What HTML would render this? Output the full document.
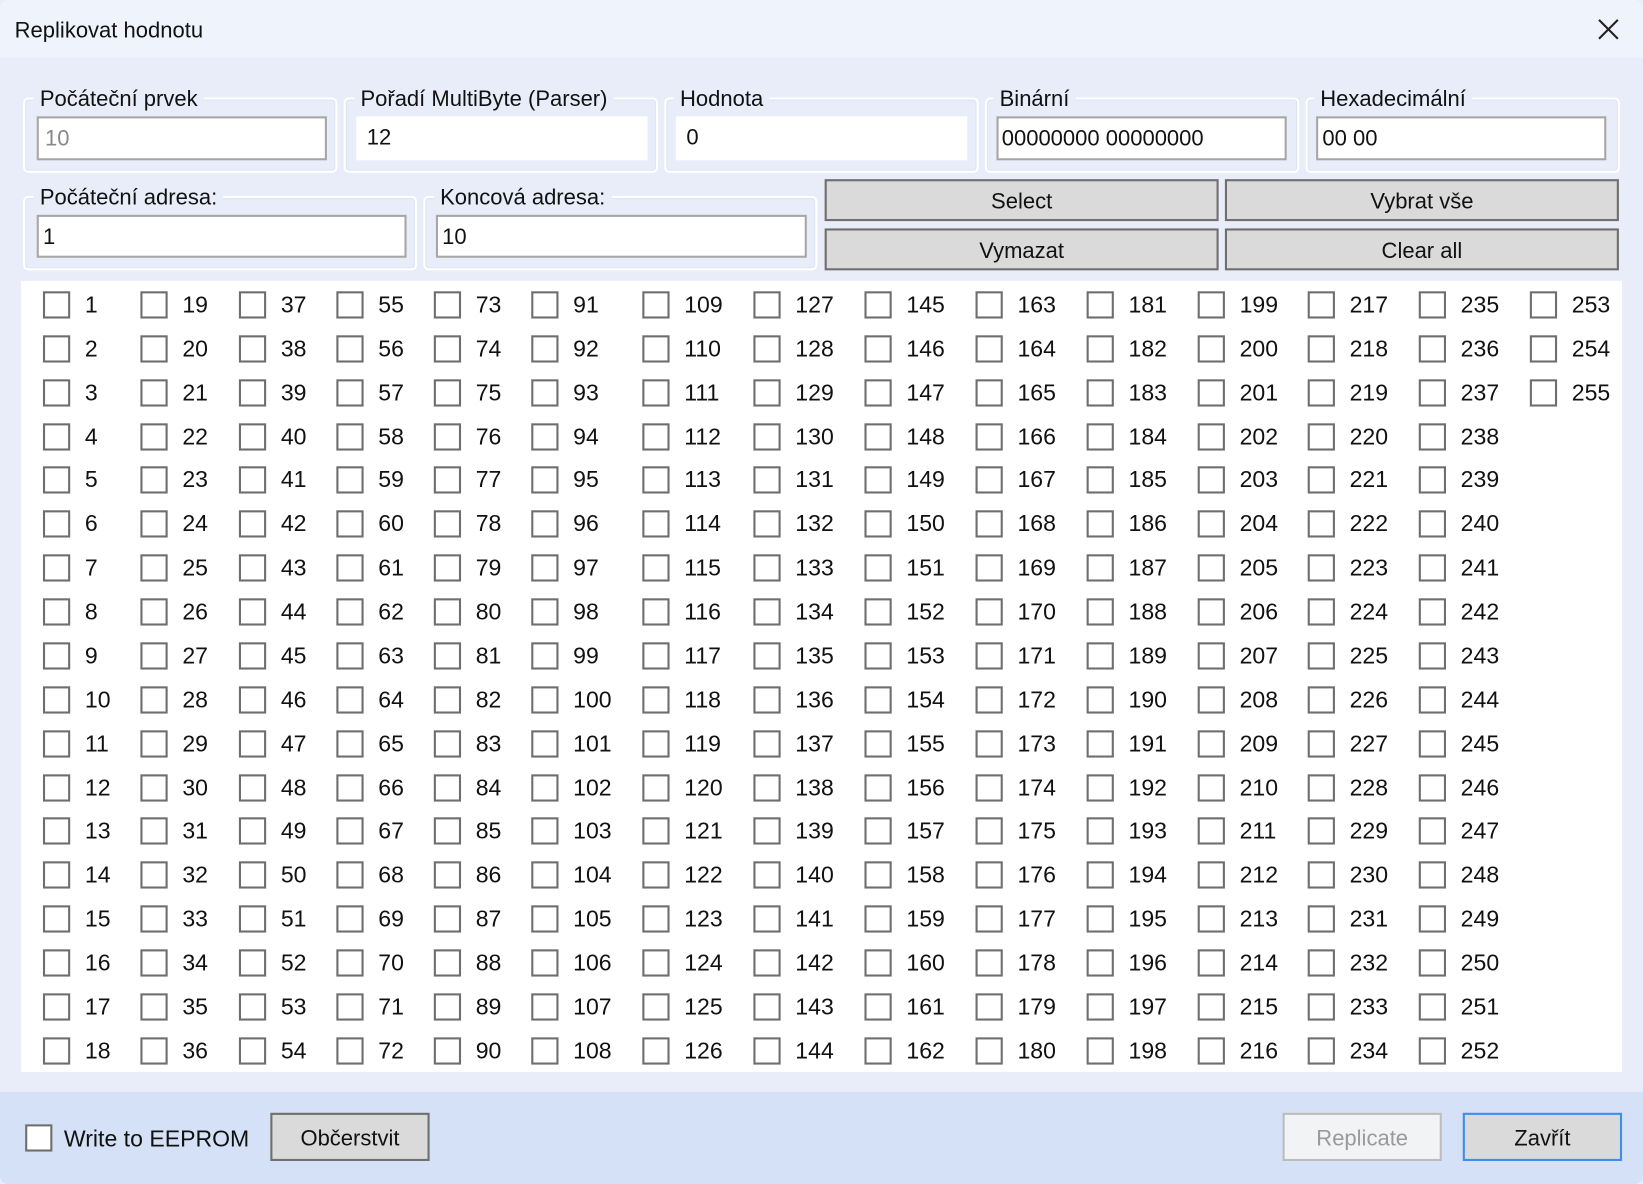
<!DOCTYPE html>
<html><head><meta charset="utf-8">
<style>
*{box-sizing:border-box;margin:0;padding:0}
html,body{width:1643px;height:1184px;overflow:hidden;background:#e9edf9}
#w{position:absolute;left:0;top:0;width:1568px;height:1130px;transform:scale(1.04783);transform-origin:0 0;font-family:"Liberation Sans","DejaVu Sans",sans-serif;color:#111;background:#e9edf9;overflow:hidden;border-radius:8px}
.abs{position:absolute}
#title{left:0;top:0;width:1568px;height:55px;background:#eff3fb}
#title span{position:absolute;left:14px;top:18px;font-size:21px}
.gb{position:absolute;border:2px solid #fff;border-radius:5px;box-shadow:inset 0 0 0 1px #dde3f3}
.lbl{position:absolute;font-size:21px;background:#e9edf9;padding:0 6px;line-height:24px}
.inp{position:absolute;background:#fff;font-size:21px;padding-left:6px;line-height:42px}
.bd{border:2px solid #a6a6a6;line-height:39px}
.btn{position:absolute;background:#dadada;border:2px solid #6f6f6f;font-size:21px;text-align:center}
#panel{left:20px;top:268px;width:1528px;height:755px;background:#fff}
.col{position:absolute;top:270px}
.it{height:41.88px;display:flex;align-items:center;font-size:22px}
.cb{width:26px;height:26px;border:2px solid #6e6e6e;background:#fff;margin-right:14px;flex:none}
#foot{left:0;top:1042px;width:1568px;height:88px;background:#d5e1f7}
</style></head><body><div id="w">
<div id="title" class="abs"><span>Replikovat hodnotu</span>
<svg class="abs" style="left:1524px;top:17px" width="22" height="22" viewBox="0 0 22 22"><path d="M2 2L20 20M20 2L2 20" stroke="#222" stroke-width="2"/></svg></div>

<div class="gb" style="left:22px;top:93px;width:300px;height:72px"></div><div class="lbl" style="left:32px;top:83px">Počáteční prvek</div>
<div class="inp bd" style="left:35px;top:111px;width:277px;height:42px;color:#888">10</div>
<div class="gb" style="left:328px;top:93px;width:300px;height:72px"></div><div class="lbl" style="left:338px;top:83px">Pořadí MultiByte (Parser)</div>
<div class="inp" style="left:340px;top:111px;width:278px;height:42px;padding-left:10px">12</div>
<div class="gb" style="left:634px;top:93px;width:300px;height:72px"></div><div class="lbl" style="left:643px;top:83px">Hodnota</div>
<div class="inp" style="left:645px;top:111px;width:278px;height:42px;padding-left:10px">0</div>
<div class="gb" style="left:940px;top:93px;width:300px;height:72px"></div><div class="lbl" style="left:948px;top:83px">Binární</div>
<div class="inp bd" style="left:951px;top:111px;width:277px;height:42px;padding-left:3px">00000000 00000000</div>
<div class="gb" style="left:1246px;top:93px;width:300px;height:72px"></div><div class="lbl" style="left:1254px;top:83px">Hexadecimální</div>
<div class="inp bd" style="left:1256px;top:111px;width:277px;height:42px;padding-left:4px">00 00</div>

<div class="gb" style="left:22px;top:187px;width:376px;height:71px"></div><div class="lbl" style="left:32px;top:177px">Počáteční adresa:</div>
<div class="inp bd" style="left:35px;top:205px;width:353px;height:41px;padding-left:4px">1</div>
<div class="gb" style="left:404px;top:187px;width:376px;height:71px"></div><div class="lbl" style="left:414px;top:177px">Koncová adresa:</div>
<div class="inp bd" style="left:416px;top:205px;width:354px;height:41px;padding-left:4px">10</div>

<div class="btn" style="left:787px;top:171px;width:376px;height:40px;line-height:40px">Select</div>
<div class="btn" style="left:1169px;top:171px;width:376px;height:40px;line-height:40px">Vybrat vše</div>
<div class="btn" style="left:787px;top:218px;width:376px;height:40px;line-height:40px">Vymazat</div>
<div class="btn" style="left:1169px;top:218px;width:376px;height:40px;line-height:40px">Clear all</div>

<div id="panel" class="abs"></div>
<div class="col" style="left:41px"><div class="it"><i class="cb"></i>1</div><div class="it"><i class="cb"></i>2</div><div class="it"><i class="cb"></i>3</div><div class="it"><i class="cb"></i>4</div><div class="it"><i class="cb"></i>5</div><div class="it"><i class="cb"></i>6</div><div class="it"><i class="cb"></i>7</div><div class="it"><i class="cb"></i>8</div><div class="it"><i class="cb"></i>9</div><div class="it"><i class="cb"></i>10</div><div class="it"><i class="cb"></i>11</div><div class="it"><i class="cb"></i>12</div><div class="it"><i class="cb"></i>13</div><div class="it"><i class="cb"></i>14</div><div class="it"><i class="cb"></i>15</div><div class="it"><i class="cb"></i>16</div><div class="it"><i class="cb"></i>17</div><div class="it"><i class="cb"></i>18</div></div>
<div class="col" style="left:134px"><div class="it"><i class="cb"></i>19</div><div class="it"><i class="cb"></i>20</div><div class="it"><i class="cb"></i>21</div><div class="it"><i class="cb"></i>22</div><div class="it"><i class="cb"></i>23</div><div class="it"><i class="cb"></i>24</div><div class="it"><i class="cb"></i>25</div><div class="it"><i class="cb"></i>26</div><div class="it"><i class="cb"></i>27</div><div class="it"><i class="cb"></i>28</div><div class="it"><i class="cb"></i>29</div><div class="it"><i class="cb"></i>30</div><div class="it"><i class="cb"></i>31</div><div class="it"><i class="cb"></i>32</div><div class="it"><i class="cb"></i>33</div><div class="it"><i class="cb"></i>34</div><div class="it"><i class="cb"></i>35</div><div class="it"><i class="cb"></i>36</div></div>
<div class="col" style="left:228px"><div class="it"><i class="cb"></i>37</div><div class="it"><i class="cb"></i>38</div><div class="it"><i class="cb"></i>39</div><div class="it"><i class="cb"></i>40</div><div class="it"><i class="cb"></i>41</div><div class="it"><i class="cb"></i>42</div><div class="it"><i class="cb"></i>43</div><div class="it"><i class="cb"></i>44</div><div class="it"><i class="cb"></i>45</div><div class="it"><i class="cb"></i>46</div><div class="it"><i class="cb"></i>47</div><div class="it"><i class="cb"></i>48</div><div class="it"><i class="cb"></i>49</div><div class="it"><i class="cb"></i>50</div><div class="it"><i class="cb"></i>51</div><div class="it"><i class="cb"></i>52</div><div class="it"><i class="cb"></i>53</div><div class="it"><i class="cb"></i>54</div></div>
<div class="col" style="left:321px"><div class="it"><i class="cb"></i>55</div><div class="it"><i class="cb"></i>56</div><div class="it"><i class="cb"></i>57</div><div class="it"><i class="cb"></i>58</div><div class="it"><i class="cb"></i>59</div><div class="it"><i class="cb"></i>60</div><div class="it"><i class="cb"></i>61</div><div class="it"><i class="cb"></i>62</div><div class="it"><i class="cb"></i>63</div><div class="it"><i class="cb"></i>64</div><div class="it"><i class="cb"></i>65</div><div class="it"><i class="cb"></i>66</div><div class="it"><i class="cb"></i>67</div><div class="it"><i class="cb"></i>68</div><div class="it"><i class="cb"></i>69</div><div class="it"><i class="cb"></i>70</div><div class="it"><i class="cb"></i>71</div><div class="it"><i class="cb"></i>72</div></div>
<div class="col" style="left:414px"><div class="it"><i class="cb"></i>73</div><div class="it"><i class="cb"></i>74</div><div class="it"><i class="cb"></i>75</div><div class="it"><i class="cb"></i>76</div><div class="it"><i class="cb"></i>77</div><div class="it"><i class="cb"></i>78</div><div class="it"><i class="cb"></i>79</div><div class="it"><i class="cb"></i>80</div><div class="it"><i class="cb"></i>81</div><div class="it"><i class="cb"></i>82</div><div class="it"><i class="cb"></i>83</div><div class="it"><i class="cb"></i>84</div><div class="it"><i class="cb"></i>85</div><div class="it"><i class="cb"></i>86</div><div class="it"><i class="cb"></i>87</div><div class="it"><i class="cb"></i>88</div><div class="it"><i class="cb"></i>89</div><div class="it"><i class="cb"></i>90</div></div>
<div class="col" style="left:507px"><div class="it"><i class="cb"></i>91</div><div class="it"><i class="cb"></i>92</div><div class="it"><i class="cb"></i>93</div><div class="it"><i class="cb"></i>94</div><div class="it"><i class="cb"></i>95</div><div class="it"><i class="cb"></i>96</div><div class="it"><i class="cb"></i>97</div><div class="it"><i class="cb"></i>98</div><div class="it"><i class="cb"></i>99</div><div class="it"><i class="cb"></i>100</div><div class="it"><i class="cb"></i>101</div><div class="it"><i class="cb"></i>102</div><div class="it"><i class="cb"></i>103</div><div class="it"><i class="cb"></i>104</div><div class="it"><i class="cb"></i>105</div><div class="it"><i class="cb"></i>106</div><div class="it"><i class="cb"></i>107</div><div class="it"><i class="cb"></i>108</div></div>
<div class="col" style="left:613px"><div class="it"><i class="cb"></i>109</div><div class="it"><i class="cb"></i>110</div><div class="it"><i class="cb"></i>111</div><div class="it"><i class="cb"></i>112</div><div class="it"><i class="cb"></i>113</div><div class="it"><i class="cb"></i>114</div><div class="it"><i class="cb"></i>115</div><div class="it"><i class="cb"></i>116</div><div class="it"><i class="cb"></i>117</div><div class="it"><i class="cb"></i>118</div><div class="it"><i class="cb"></i>119</div><div class="it"><i class="cb"></i>120</div><div class="it"><i class="cb"></i>121</div><div class="it"><i class="cb"></i>122</div><div class="it"><i class="cb"></i>123</div><div class="it"><i class="cb"></i>124</div><div class="it"><i class="cb"></i>125</div><div class="it"><i class="cb"></i>126</div></div>
<div class="col" style="left:719px"><div class="it"><i class="cb"></i>127</div><div class="it"><i class="cb"></i>128</div><div class="it"><i class="cb"></i>129</div><div class="it"><i class="cb"></i>130</div><div class="it"><i class="cb"></i>131</div><div class="it"><i class="cb"></i>132</div><div class="it"><i class="cb"></i>133</div><div class="it"><i class="cb"></i>134</div><div class="it"><i class="cb"></i>135</div><div class="it"><i class="cb"></i>136</div><div class="it"><i class="cb"></i>137</div><div class="it"><i class="cb"></i>138</div><div class="it"><i class="cb"></i>139</div><div class="it"><i class="cb"></i>140</div><div class="it"><i class="cb"></i>141</div><div class="it"><i class="cb"></i>142</div><div class="it"><i class="cb"></i>143</div><div class="it"><i class="cb"></i>144</div></div>
<div class="col" style="left:825px"><div class="it"><i class="cb"></i>145</div><div class="it"><i class="cb"></i>146</div><div class="it"><i class="cb"></i>147</div><div class="it"><i class="cb"></i>148</div><div class="it"><i class="cb"></i>149</div><div class="it"><i class="cb"></i>150</div><div class="it"><i class="cb"></i>151</div><div class="it"><i class="cb"></i>152</div><div class="it"><i class="cb"></i>153</div><div class="it"><i class="cb"></i>154</div><div class="it"><i class="cb"></i>155</div><div class="it"><i class="cb"></i>156</div><div class="it"><i class="cb"></i>157</div><div class="it"><i class="cb"></i>158</div><div class="it"><i class="cb"></i>159</div><div class="it"><i class="cb"></i>160</div><div class="it"><i class="cb"></i>161</div><div class="it"><i class="cb"></i>162</div></div>
<div class="col" style="left:931px"><div class="it"><i class="cb"></i>163</div><div class="it"><i class="cb"></i>164</div><div class="it"><i class="cb"></i>165</div><div class="it"><i class="cb"></i>166</div><div class="it"><i class="cb"></i>167</div><div class="it"><i class="cb"></i>168</div><div class="it"><i class="cb"></i>169</div><div class="it"><i class="cb"></i>170</div><div class="it"><i class="cb"></i>171</div><div class="it"><i class="cb"></i>172</div><div class="it"><i class="cb"></i>173</div><div class="it"><i class="cb"></i>174</div><div class="it"><i class="cb"></i>175</div><div class="it"><i class="cb"></i>176</div><div class="it"><i class="cb"></i>177</div><div class="it"><i class="cb"></i>178</div><div class="it"><i class="cb"></i>179</div><div class="it"><i class="cb"></i>180</div></div>
<div class="col" style="left:1037px"><div class="it"><i class="cb"></i>181</div><div class="it"><i class="cb"></i>182</div><div class="it"><i class="cb"></i>183</div><div class="it"><i class="cb"></i>184</div><div class="it"><i class="cb"></i>185</div><div class="it"><i class="cb"></i>186</div><div class="it"><i class="cb"></i>187</div><div class="it"><i class="cb"></i>188</div><div class="it"><i class="cb"></i>189</div><div class="it"><i class="cb"></i>190</div><div class="it"><i class="cb"></i>191</div><div class="it"><i class="cb"></i>192</div><div class="it"><i class="cb"></i>193</div><div class="it"><i class="cb"></i>194</div><div class="it"><i class="cb"></i>195</div><div class="it"><i class="cb"></i>196</div><div class="it"><i class="cb"></i>197</div><div class="it"><i class="cb"></i>198</div></div>
<div class="col" style="left:1143px"><div class="it"><i class="cb"></i>199</div><div class="it"><i class="cb"></i>200</div><div class="it"><i class="cb"></i>201</div><div class="it"><i class="cb"></i>202</div><div class="it"><i class="cb"></i>203</div><div class="it"><i class="cb"></i>204</div><div class="it"><i class="cb"></i>205</div><div class="it"><i class="cb"></i>206</div><div class="it"><i class="cb"></i>207</div><div class="it"><i class="cb"></i>208</div><div class="it"><i class="cb"></i>209</div><div class="it"><i class="cb"></i>210</div><div class="it"><i class="cb"></i>211</div><div class="it"><i class="cb"></i>212</div><div class="it"><i class="cb"></i>213</div><div class="it"><i class="cb"></i>214</div><div class="it"><i class="cb"></i>215</div><div class="it"><i class="cb"></i>216</div></div>
<div class="col" style="left:1248px"><div class="it"><i class="cb"></i>217</div><div class="it"><i class="cb"></i>218</div><div class="it"><i class="cb"></i>219</div><div class="it"><i class="cb"></i>220</div><div class="it"><i class="cb"></i>221</div><div class="it"><i class="cb"></i>222</div><div class="it"><i class="cb"></i>223</div><div class="it"><i class="cb"></i>224</div><div class="it"><i class="cb"></i>225</div><div class="it"><i class="cb"></i>226</div><div class="it"><i class="cb"></i>227</div><div class="it"><i class="cb"></i>228</div><div class="it"><i class="cb"></i>229</div><div class="it"><i class="cb"></i>230</div><div class="it"><i class="cb"></i>231</div><div class="it"><i class="cb"></i>232</div><div class="it"><i class="cb"></i>233</div><div class="it"><i class="cb"></i>234</div></div>
<div class="col" style="left:1354px"><div class="it"><i class="cb"></i>235</div><div class="it"><i class="cb"></i>236</div><div class="it"><i class="cb"></i>237</div><div class="it"><i class="cb"></i>238</div><div class="it"><i class="cb"></i>239</div><div class="it"><i class="cb"></i>240</div><div class="it"><i class="cb"></i>241</div><div class="it"><i class="cb"></i>242</div><div class="it"><i class="cb"></i>243</div><div class="it"><i class="cb"></i>244</div><div class="it"><i class="cb"></i>245</div><div class="it"><i class="cb"></i>246</div><div class="it"><i class="cb"></i>247</div><div class="it"><i class="cb"></i>248</div><div class="it"><i class="cb"></i>249</div><div class="it"><i class="cb"></i>250</div><div class="it"><i class="cb"></i>251</div><div class="it"><i class="cb"></i>252</div></div>
<div class="col" style="left:1460px"><div class="it"><i class="cb"></i>253</div><div class="it"><i class="cb"></i>254</div><div class="it"><i class="cb"></i>255</div></div>

<div id="foot" class="abs"></div>
<div class="abs" style="left:24px;top:1073px;width:26px;height:26px;border:2px solid #6e6e6e;background:#fff"></div>
<div class="abs" style="left:61px;top:1074px;font-size:22px">Write to EEPROM</div>
<div class="btn" style="left:258px;top:1062px;width:152px;height:46px;line-height:46px">Občerstvit</div>
<div class="btn" style="left:1224px;top:1062px;width:152px;height:46px;line-height:46px;background:#f2f3f5;border-color:#bcbcbc;color:#9a9a9a">Replicate</div>
<div class="btn" style="left:1396px;top:1062px;width:152px;height:46px;line-height:46px;border-color:#3a8ff0">Zavřít</div>
</div></body></html>
